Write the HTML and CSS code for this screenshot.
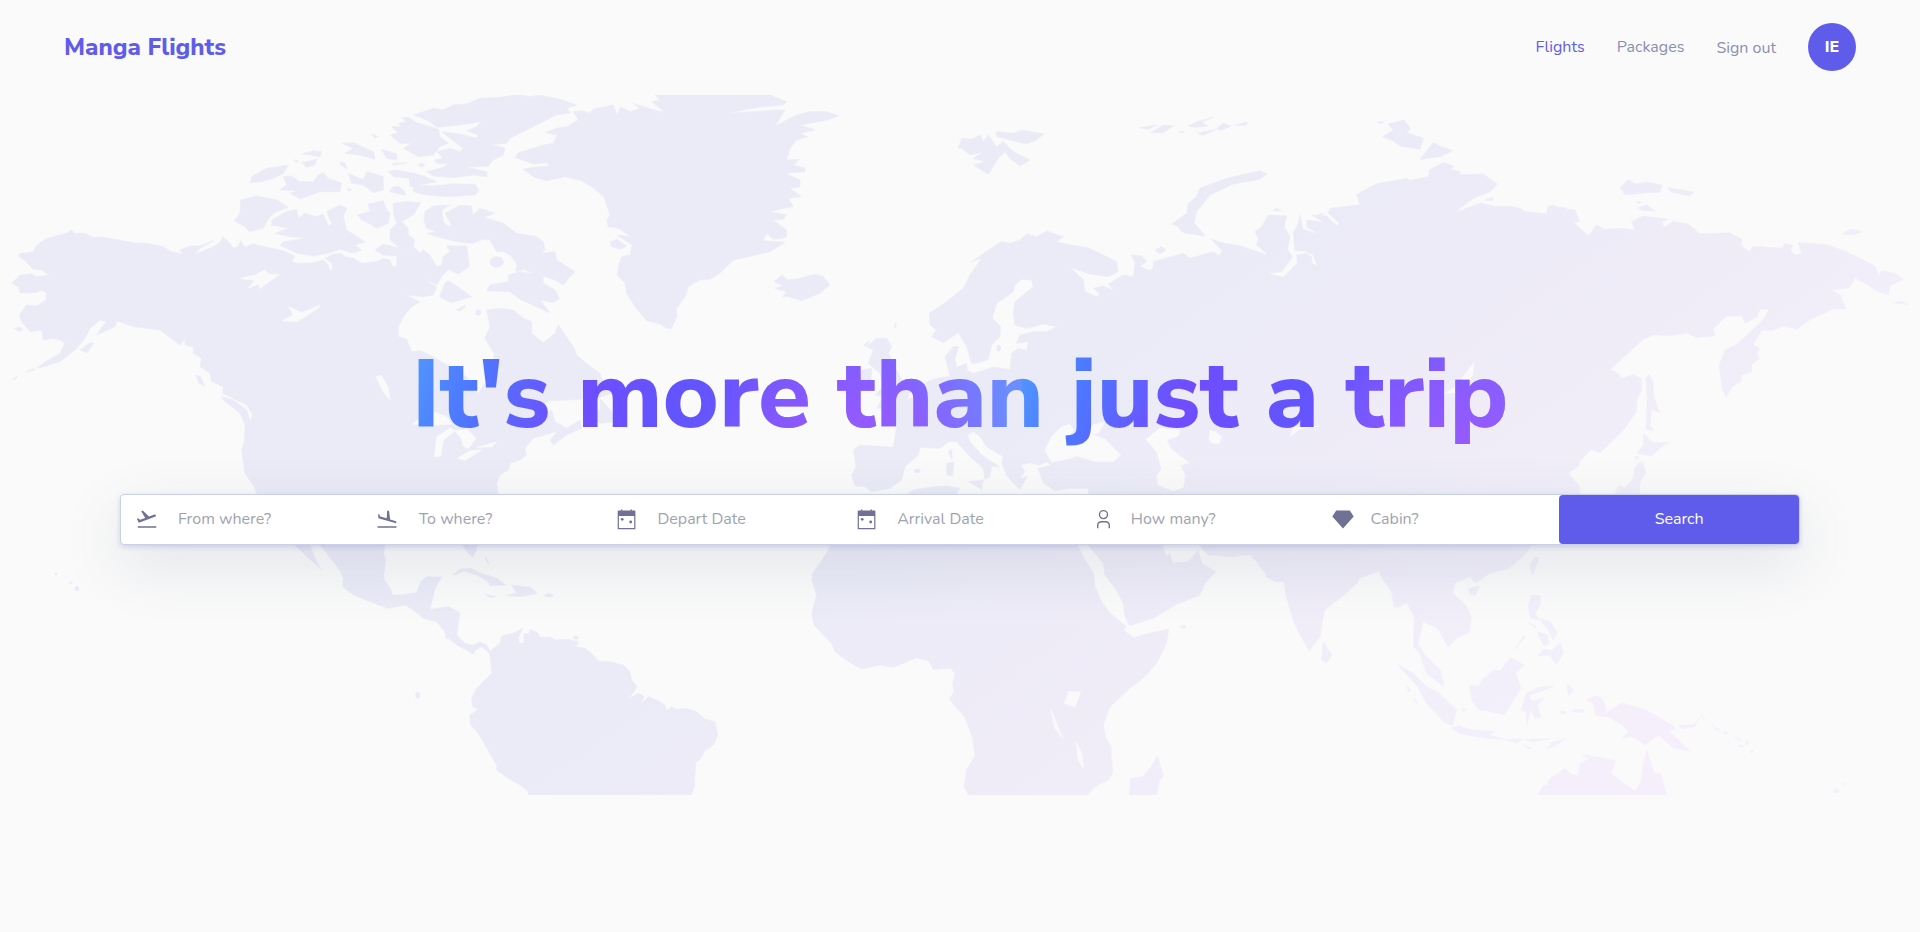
FILE: index.html
```html
<!DOCTYPE html>
<html lang="en">
<head>
<meta charset="utf-8">
<title>Manga Flights</title>
<link rel="stylesheet" href="styles.css">
</head>
<body>
<header class="header">
  <a class="brand">Manga Flights</a>
  <nav class="nav">
    <a class="nav-link nav-link-active">Flights</a>
    <a class="nav-link nav-packages">Packages</a>
    <a class="nav-link nav-signout">Sign out</a>
    <span class="avatar">IE</span>
  </nav>
</header>
<main class="hero">
  <svg class="map" viewBox="0 95 1920 700" aria-hidden="true">
    <defs>
      <linearGradient id="tint" gradientUnits="userSpaceOnUse" x1="0" y1="0" x2="986" y2="1377">
        <stop offset="0.56" stop-color="#ebebf7"/>
        <stop offset="0.7" stop-color="#efecf8"/>
        <stop offset="0.82" stop-color="#f2effa"/>
        <stop offset="0.92" stop-color="#f5effb"/>
      </linearGradient>
      <mask id="land" maskUnits="userSpaceOnUse" x="0" y="95" width="1920" height="700">
        <g transform="scale(.33333)" fill="#fff" stroke="#fff" stroke-width="2" stroke-linejoin="round">
          <!-- North America -->
          <path d="M35,850L60,825 95,822 110,830 148,826 125,810 100,808 75,782 55,768 60,760 100,756 108,738 135,718 165,708 200,700 215,690 225,700 250,700 265,705 280,712 310,712 345,718 400,728 440,730 490,740 515,755 548,762 540,750 570,738 600,738 640,722 600,745 585,762 605,755 650,735 662,725 668,710 685,725 700,745 715,738 722,722 735,742 760,732 800,742 850,752 885,768 875,785 895,790 940,788 970,780 985,795 990,812 998,808 995,790 975,775 1000,762 1025,760 1035,770 1060,775 1085,790 1130,785 1150,775 1170,780 1178,800 1190,798 1190,775 1205,750 1170,720 1170,690 1190,670 1180,640 1180,610 1220,605 1262,608 1240,645 1205,665 1225,685 1225,705 1245,720 1240,740 1262,760 1268,748 1290,765 1310,800 1325,795 1330,770 1350,755 1340,738 1400,738 1408,800 1375,822 1345,808 1325,830 1310,855 1270,835 1310,862 1300,885 1270,890 1215,885 1260,905 1235,920 1210,950 1195,980 1195,1010 1220,1018 1235,1055 1260,1052 1300,1070 1350,1100 1400,1130 1415,1160 1435,1180 1455,1150 1480,1110 1482,1060 1455,1015 1470,980 1460,930 1500,925 1540,930 1570,955 1595,965 1595,1000 1630,1028 1665,1000 1675,975 1695,1005 1720,1040 1730,1065 1765,1095 1800,1120 1810,1150 1840,1150 1835,1180 1790,1195 1700,1200 1645,1202 1600,1250 1640,1240 1655,1230 1665,1265 1700,1285 1740,1260 1745,1285 1700,1305 1660,1335 1650,1320 1672,1295 1650,1300 1600,1315 1575,1345 1580,1365 1560,1380 1530,1390 1525,1410 1500,1425 1490,1450 1495,1490 1430,1560 1430,1640 1428,1655 1417,1672 1405,1660 1390,1640 1380,1600 1200,1600 1155,1635 1150,1660 1157,1680 1150,1735 1170,1765 1178,1785 1200,1785 1250,1778 1262,1745 1280,1730 1325,1732 1305,1765 1295,1810 1290,1828 1345,1820 1380,1838 1375,1870 1370,1905 1390,1930 1415,1940 1400,1950 1370,1935 1360,1920 1338,1915 1335,1895 1310,1865 1270,1855 1240,1830 1215,1815 1190,1820 1165,1825 1110,1805 1060,1785 1028,1760 1030,1735 1020,1710 980,1660 960,1635 900,1560 770,1480 765,1465 735,1420 730,1385 725,1350 733,1325 735,1275 720,1240 670,1200 665,1190 700,1200 740,1230 750,1265 758,1245 740,1215 690,1190 668,1180 670,1160 635,1145 630,1120 600,1100 605,1075 580,1060 580,1040 555,1035 555,1015 540,1035 500,1005 480,990 440,985 400,980 350,962 345,980 290,1005 310,975 320,965 300,960 270,985 255,1015 230,1045 200,1070 180,1085 130,1100 110,1105 145,1080 180,1060 195,1030 180,1020 160,1015 130,1020 125,990 90,995 65,965 58,945 80,915 110,918 138,900 140,880 125,870 105,878 60,878 55,860Z"/>
          <path d="M240,1050L270,1028 282,1030 262,1058ZM42,985L60,982 70,990 55,994ZM80,1115L100,1106 104,1110ZM38,1138L52,1128 46,1138ZM588,1125L602,1130 614,1158 595,1148Z"/>
          <!-- Canadian archipelago -->
          <path d="M1170,405L1195,398 1175,380 1205,380 1195,370 1220,365 1205,354 1225,352 1250,368 1290,380 1315,388 1320,410 1345,430 1320,440 1300,465 1255,470 1210,445 1235,430 1200,430ZM1025,430L1060,428 1120,455 1125,478 1080,465 1035,460 1060,445ZM1145,448L1190,462 1190,480 1160,475ZM1175,490L1220,488 1180,496ZM1020,485L1035,490 1042,508 1022,495ZM1045,520L1090,540 1100,515 1150,530 1150,570 1120,578 1090,555 1055,550ZM1168,575L1180,560 1200,560 1215,575 1215,586ZM752,548L755,530 800,505 865,495 850,520 820,535 785,545ZM905,462L940,452 965,455 960,470 930,464ZM905,488L950,478 945,495 920,502ZM880,480L895,482 890,487ZM1113,402L1135,410 1125,414ZM840,570L860,555 850,530 875,528 900,545 940,545 955,525 970,518 985,535 1025,550 1020,575 960,575 900,597 870,580 890,572ZM722,600L770,588 830,600 865,622 820,640 800,665 790,685 748,695 735,680 703,663 720,640ZM815,660L860,635 890,628 895,655 915,640 950,650 970,642 985,678 995,672 980,635 1020,615 1040,625 1030,650 1040,690 1095,725 1065,735 1085,750 1060,760 1020,748 990,758 940,768 890,760 840,735 850,725 920,715 870,710 825,700 865,685 815,675ZM1073,645L1110,635 1105,612 1150,602 1160,630 1170,640 1165,670 1130,685 1110,672 1085,660ZM1125,750L1150,733 1180,740 1200,745 1210,770 1190,768 1150,765ZM1345,842L1380,865 1415,890 1400,895 1355,908 1318,890 1335,850ZM1165,515L1185,510 1245,520 1275,530 1310,545 1230,560 1228,535 1180,530ZM1255,495L1265,490 1275,495 1265,502ZM1042,565L1055,568 1048,574ZM1370,930L1395,915 1395,922 1378,934Z"/>
          <g transform="translate(1200 240)">
            <path d="M40,105L100,85 130,90 160,75 200,72 240,55 300,52 350,44 390,50 420,45 480,58 530,75 500,85 510,98 470,105 420,130 370,155 330,175 320,190 275,193 315,205 310,225 280,240 265,258 200,262 260,275 262,290 220,285 160,293 100,288 80,275 130,262 145,252 110,250 103,240 130,235 110,215 150,205 180,215 190,205 170,190 150,175 125,155 180,162 230,175 235,165 200,152 230,140 243,125 180,135 110,142 90,125 60,112ZM40,315L100,318 160,312 225,313 237,330 225,345 140,350 80,345 40,335ZM75,395L100,378 150,375 125,390 130,425 145,440 155,435 135,400 180,376 215,378 218,405 240,385 285,400 250,412 310,430 350,460 380,465 410,470 430,485 435,510 425,520 465,515 470,540 525,575 510,590 490,615 465,600 430,588 430,610 465,630 478,655 460,668 420,660 450,698 430,690 360,658 330,635 260,632 270,615 325,605 325,585 360,575 390,580 370,595 395,578 370,568 348,575 350,550 330,525 310,515 290,515 270,480 250,478 220,490 180,487 110,470 80,460 110,455 80,445 72,420Z"/>
            <ellipse cx="290" cy="546" rx="20" ry="16"/><ellipse cx="235" cy="698" rx="8" ry="8"/>
            <path d="M560,1010L600,990 600,955 640,1000 645,1025 600,1030Z"/>
            <!-- Greenland -->
            <path d="M520,95L545,92 570,100 580,88 640,75 652,106 662,80 690,95 720,85 700,70 755,88 795,98 755,65 780,60 765,45 1110,45 1160,65 1150,75 1090,80 1040,88 985,100 1060,95 1130,90 1155,90 1125,138 1190,105 1230,95 1280,95 1315,107 1290,118 1240,128 1200,135 1245,150 1200,160 1222,170 1190,180 1170,205 1160,240 1198,238 1180,255 1215,265 1215,275 1155,280 1200,300 1200,320 1170,325 1205,350 1165,355 1180,380 1150,385 1110,395 1160,405 1150,418 1118,420 1160,450 1158,472 1120,478 1100,460 1088,482 1155,487 1110,515 1060,527 1000,540 960,580 930,597 900,600 865,620 855,650 830,685 830,710 815,745 800,745 780,732 740,722 705,680 680,640 675,610 652,585 655,560 665,530 690,525 697,495 650,465 694,470 655,445 625,440 620,420 630,405 612,350 575,320 545,302 495,290 440,302 400,290 370,268 400,262 450,258 440,248 400,252 345,232 355,218 400,205 430,195 460,190 472,165 435,158 470,145 500,140 535,120ZM630,485L650,478 680,498 660,508 635,500Z"/>
            <!-- Iceland -->
            <path d="M1122,605L1145,585 1165,600 1200,595 1245,583 1270,590 1290,615 1260,640 1205,662 1165,650 1148,650 1160,635 1125,625 1150,618Z"/>
          </g>
          <!-- Caribbean -->
          <g transform="translate(300 1440)">
            <path d="M585,195L630,195 645,235 662,268 645,250 620,230ZM1060,285L1078,268 1110,265 1145,280 1190,295 1218,315 1170,317 1165,305 1130,285 1095,273ZM1235,316L1290,322 1312,340 1265,350 1220,346 1250,338ZM1155,343L1187,350 1170,352ZM1156,230L1168,252 1162,248Z"/>
            <ellipse cx="1347" cy="346" rx="13" ry="5"/><ellipse cx="953" cy="646" rx="6" ry="9"/>
          </g>
          <ellipse cx="231" cy="1766" rx="6" ry="7"/><ellipse cx="212" cy="1748" rx="6" ry="2"/><ellipse cx="168" cy="1722" rx="4" ry="3"/>
          <!-- South America -->
          <g transform="translate(1350 1440)">
            <path d="M10,460L0,480 40,505 70,523 75,512 95,500 118,520 122,540 125,580 105,600 80,625 65,655 68,680 85,688 60,705 62,735 85,760 105,795 140,855 140,870 175,895 210,915 235,935 235,946 724,946 733,920 737,845 748,842 765,812 790,795 803,765 795,725 765,718 740,695 710,685 680,688 665,680 648,692 645,675 620,660 595,650 570,675 583,650 565,640 537,655 562,620 545,600 540,575 520,555 480,545 445,543 425,520 405,505 378,500 385,485 350,478 315,480 300,472 270,472 262,458 240,448 238,460 222,462 222,490 208,490 205,475 218,445 195,458 155,468 150,490 130,505 120,515 110,495 90,485 70,495 45,490 20,465Z"/>
            <ellipse cx="377" cy="473" rx="8" ry="5"/>
          </g>
          <!-- Europe and the Arctic islands -->
          <g transform="translate(2340 240)">
            <path d="M448,700L470,685 500,665 550,625 570,585 605,535 575,545 640,500 665,485 690,490 720,480 740,462 770,470 800,453 850,470 830,485 870,495 920,502 960,520 1010,545 1014,575 985,590 930,582 870,562 900,590 910,598 915,635 950,650 960,642 940,625 970,618 1002,632 985,612 1030,585 1060,590 1065,550 1055,525 1085,528 1100,545 1080,560 1110,572 1150,540 1200,530 1230,535 1300,515 1320,530 1330,505 1310,490 1380,497 1460,525 1460,1260 925,1260 925,1225 870,1225 825,1232 790,1210 775,1165 815,1155 800,1145 780,1155 750,1148 722,1155 735,1175 720,1195 742,1190 720,1228 700,1210 680,1185 665,1150 670,1130 620,1100 600,1070 580,1055 562,1065 570,1085 605,1125 658,1160 635,1160 630,1190 615,1198 610,1165 570,1130 530,1085 505,1085 480,1105 420,1102 415,1125 375,1160 365,1200 330,1225 275,1235 255,1220 225,1218 215,1185 228,1160 220,1110 240,1095 340,1102 350,1040 310,1000 300,980 350,975 400,950 440,905 470,895 510,888 495,830 520,800 535,800 525,840 530,862 560,850 562,872 580,880 640,862 690,868 695,820 715,805 740,812 745,785 710,790 720,765 760,755 800,755 832,740 790,732 740,745 705,735 700,700 705,665 760,620 755,600 725,598 705,615 700,635 650,670 637,715 662,740 660,770 635,795 625,838 590,850 575,850 560,800 535,758 490,788 455,770 470,750 450,735Z"/>
            <path d="M265,850L280,810 260,800 290,775 320,775 335,800 325,820 345,860 370,910 390,935 380,965 340,975 290,985 310,950 285,945 310,920 300,880ZM235,920L245,870 275,865 272,925ZM252,795L268,782 258,800ZM342,745L347,728 350,738ZM565,1205L610,1200 605,1228ZM500,1150L522,1146 518,1188 500,1185ZM505,1115L515,1108 516,1138ZM370,1250L400,1230 450,1222 500,1218 540,1225 530,1240 560,1260ZM1125,510L1145,500 1158,510 1140,522Z"/>
            <ellipse cx="412" cy="1173" rx="9" ry="5"/><ellipse cx="656" cy="805" rx="6" ry="9"/>
            <path d="M535,205L545,175 575,178 600,165 610,185 625,165 650,200 670,185 700,215 750,240 720,258 690,235 675,215 655,235 625,283 580,255 615,245 580,235 610,215 570,225 545,205ZM648,155L700,160 725,150 792,162 770,180 740,192 690,180 650,170ZM1078,143L1130,135 1105,148ZM1112,158L1150,135 1180,138 1150,158ZM1195,155L1215,154 1205,160ZM1225,138L1250,125 1300,112 1265,125 1282,138 1245,142ZM1252,160L1310,148 1270,166ZM1310,145L1330,130 1355,138 1325,150ZM1363,136L1403,126 1398,136Z"/>
          </g>
          <!-- Siberia -->
          <g transform="translate(3480 240)">
            <path d="M-20,545L70,520 90,535 150,525 170,532 190,515 165,490 155,478 185,488 230,497 310,535 320,520 290,495 295,475 285,455 305,440 325,405 380,408 372,440 390,470 382,510 398,530 365,575 322,580 370,592 412,550 410,525 440,520 455,530 455,550 472,557 460,525 435,512 405,512 400,460 415,430 420,405 428,448 474,462 440,440 440,420 495,428 455,405 500,408 530,438 538,430 505,400 510,385 600,375 590,345 605,335 650,312 740,295 750,302 805,290 808,270 850,248 882,258 870,268 900,275 900,285 970,282 1012,312 990,335 940,355 880,400 920,385 960,370 1000,378 1005,390 1060,382 1100,395 1160,402 1170,378 1220,385 1220,1260 -20,1260Z"/>
            <path d="M35,432L80,400 85,370 110,350 120,325 200,295 300,272 320,282 300,298 220,312 150,345 110,395 102,428 135,468 80,460 65,455 55,440ZM668,170L700,150 685,132 732,120 752,145 740,158 790,175 780,208 720,198 700,182ZM652,126L672,126 662,130ZM780,238L820,188 840,198 878,212 840,230ZM338,392L350,384 362,392ZM975,360L1000,352 998,362ZM475,402L490,400 482,406Z"/>
          </g>
          <!-- Far East -->
          <g transform="translate(4500 0) scale(1 1.0714)">
            <path d="M-20,578L30,578 65,585 70,595 140,600 145,578 160,573 180,585 225,588 238,620 220,622 265,660 290,630 310,642 375,640 405,645 395,620 430,605 505,614 485,620 492,637 520,620 565,628 600,655 690,652 725,670 725,688 748,705 760,690 845,695 855,682 880,688 870,698 885,714 905,710 895,680 980,685 1040,705 1125,745 1137,774 1145,758 1185,765 1210,782 1170,800 1165,825 1130,815 1100,795 1065,778 1050,805 990,812 1020,825 1038,865 1000,865 930,895 890,922 850,912 820,925 785,925 760,965 778,975 770,990 778,1005 755,1020 755,1040 725,1050 720,1070 700,1080 678,1112 668,1090 657,1025 675,980 710,965 790,895 808,865 780,866 770,888 735,905 725,885 680,885 640,920 645,940 590,945 560,932 510,940 460,937 430,950 330,1035 355,1045 365,1060 400,1048 425,1062 425,1095 412,1115 408,1155 370,1205 300,1268 275,1258 240,1290 235,1305 205,1325 238,1360 240,1390 190,1390 190,1370 165,1355 170,1330 145,1318 110,1335 105,1325 120,1303 85,1315 50,1340 75,1370 120,1360 80,1390 -20,1390Z"/>
            <path d="M437,1060L447,1048 460,1070 460,1105 478,1155 455,1145 450,1190 463,1205 438,1203 442,1110ZM432,1215L460,1240 508,1238 480,1255 455,1277 410,1270 430,1245ZM405,1278L418,1280 408,1288ZM415,1298L428,1293 437,1325 420,1350 418,1390 343,1390 355,1360 375,1365 400,1340 405,1310ZM360,525L385,502 405,515 440,510 487,518 480,538 440,540 375,545ZM503,525L582,538 570,548 515,538ZM410,565L425,565 415,570ZM415,582L440,574 465,590 430,590ZM1028,655L1050,642 1087,648 1060,658ZM1178,847L1205,844 1227,854Z"/>
          </g>
          <!-- Africa and Arabia -->
          <g transform="translate(2400 1440)">
            <path d="M115,150L90,200 70,235 38,280 36,300 50,345 36,400 42,435 70,465 95,490 105,515 150,548 185,567 240,555 280,562 350,533 385,542 400,568 450,565 465,580 458,610 462,635 448,658 495,712 518,775 525,825 500,870 492,920 505,946 862,946 885,920 925,900 938,880 933,800 918,775 910,735 930,680 990,625 1035,590 1070,550 1100,490 1106,447 1060,457 1000,473 970,450 980,440 930,400 905,365 885,320 880,280 855,240 830,190 800,150ZM850,150L865,195 910,250 915,285 950,330 970,370 975,410 988,437 1060,415 1125,375 1200,345 1215,310 1247,275 1205,250 1195,210 1165,245 1118,250 1110,220 1100,230 1085,190 1085,150ZM1180,150L1205,205 1225,225 1300,230 1350,223 1370,245 1400,285 1425,305 1460,303 1460,150ZM988,946L992,898 1030,888 1050,865 1073,828 1090,888 1078,900 1070,946Z"/>
            <ellipse cx="1150" cy="440" rx="8" ry="4"/>
          </g>
          <!-- South-east Asia and Oceania -->
          <g transform="translate(3720 1440) scale(1.301 1)">
            <path d="M-20,190L0,225 25,225 60,270 60,290 85,305 100,283 105,340 125,430 145,480 160,512 185,470 190,420 195,390 240,345 270,310 275,295 320,272 330,300 350,335 355,382 370,380 385,368 402,410 400,500 415,520 430,580 470,620 462,570 430,530 410,490 422,425 455,445 480,500 500,475 530,455 533,410 520,375 490,340 495,310 530,290 543,310 575,280 620,265 655,225 675,190 675,150 -20,150ZM192,485L212,525 200,548 188,540ZM528,325L552,318 542,348 528,340ZM668,255L680,232 690,235 675,283ZM672,345L692,348 693,375 680,400 690,420 670,415 665,375ZM690,415L715,425 732,460 722,480 710,450ZM685,455L710,465 712,490 700,497ZM668,428L682,440 680,445ZM687,528L700,508 718,512 738,488 746,520 730,553 712,525ZM633,508L655,467 658,472ZM528,615L550,620 560,598 585,570 600,572 625,533 655,555 635,580 648,625 630,660 610,705 570,692 550,690 535,660ZM362,552L400,580 430,620 460,640 500,690 490,737 470,725 430,670 410,620 385,585ZM488,745L505,737 530,748 585,755 575,765 610,778 570,775 510,762ZM613,780L650,776 640,789ZM655,778L715,776 675,786ZM708,806L718,788 752,776 722,800ZM652,793L672,805 665,806ZM648,692L660,640 690,622 723,618 690,636 668,645 672,665 703,653 685,675 694,712 680,714 670,685 662,735 660,695ZM753,612L770,630 758,648ZM798,660L820,648 835,655 847,697 880,668 935,690 970,715 1005,744 990,755 1020,790 1037,812 1000,805 965,765 935,794 905,770 880,775 897,755 885,738 850,712 820,706 815,670ZM1010,736L1045,735 1062,712 1048,740 1020,746ZM1062,700L1072,718 1068,716ZM1088,732L1105,752 1098,750ZM1140,768L1158,782 1154,784ZM686,946L700,915 708,920 712,900 750,865 765,885 780,885 785,850 815,830 868,842 855,880 880,905 910,932 925,905 930,850 938,812 950,860 955,880 970,880 984,946ZM385,618L393,632 388,634ZM402,656L409,668 404,668ZM1388,916L1398,908 1390,918Z"/>
            <ellipse cx="780" cy="693" rx="14" ry="4"/><ellipse cx="745" cy="697" rx="7" ry="4"/><ellipse cx="1375" cy="933" rx="7" ry="6"/><ellipse cx="1120" cy="758" rx="5" ry="3"/><ellipse cx="1156" cy="798" rx="6" ry="3"/><ellipse cx="1168" cy="788" rx="3" ry="7"/><ellipse cx="1180" cy="815" rx="4" ry="3"/><ellipse cx="517" cy="690" rx="4" ry="4"/><ellipse cx="800" cy="829" rx="9" ry="3"/>
          </g>
        </g>
        <!-- Lakes and inland seas -->
        <g transform="scale(.33333)" fill="#000" stroke="#000" stroke-width="2" stroke-linejoin="round">
          <path d="M722,835L765,825 795,810 805,822 838,824 800,850 780,866 775,852 745,864 765,840 730,837ZM846,962L880,945 866,920 905,938 960,915 955,925 890,965ZM1128,1130L1145,1126 1165,1165 1170,1200 1150,1175Z"/>
          <path transform="translate(1200 240)" d="M38,1032L90,992 140,1010 155,1032 110,1035ZM104,1130L110,1070 150,1045 165,1052 130,1080 122,1128ZM165,1052L200,1048 228,1075 205,1105 190,1100 185,1078ZM173,1135L210,1112 245,1110 195,1141ZM232,1102L290,1086 275,1100Z"/>
          <path transform="translate(2340 240)" d="M795,1110L815,1070 845,1040 870,1033 880,1050 870,1065 900,1075 930,1060 975,1078 1022,1125 1000,1145 950,1145 890,1128 850,1140 815,1147ZM905,1045L975,1025 955,1060 915,1062ZM1098,1078L1140,1045 1200,1050 1195,1068 1160,1080 1172,1105 1195,1125 1228,1148 1200,1155 1215,1185 1210,1222 1180,1232 1135,1215 1130,1190 1145,1165 1130,1115ZM1287,1080L1290,1052 1305,1055 1325,1070 1318,1090 1298,1090Z"/>
          <path transform="translate(3480 240)" d="M850,942L885,922 942,848 938,885 900,935ZM392,1068L400,1042 478,1038 420,1048Z"/>
          <path transform="translate(2400 1440)" d="M793,670L805,635 842,636 825,680ZM752,688L768,725 787,773 765,745ZM829,788L845,820 852,867 835,840Z"/>
        </g>
      </mask>
    </defs>
    <rect y="95" width="1920" height="700" fill="url(#tint)" mask="url(#land)"/>
  </svg>
  <div class="content">
    <h1 class="headline">It's more than just a trip</h1>
    <form class="search">
      <div class="field">
        <svg class="icon" width="24" height="24" viewBox="0 0 24 24"><path d="M20.900 8.300c-.2-.6-.7-.9-1.300-.7L14 9.500 7.700 3.600l-1.500.6 4 6.800-5.200 1.800-2-1.500-1.100.4 1.900 4 16.200-5.900c.7-.2 1.100-.8.9-1.500zM2.800 19.200h18.500v1.500H2.800z"/></svg>
        <span>From where?</span>
      </div>
      <div class="field field-landing">
        <svg class="icon" width="24" height="24" viewBox="0 0 24 24"><path d="M3.200 6.900l1.100.3.900 2.300 6.500 1.700.5-7.700 1.900.5 1 8.400 5.200 1.500c.7.200 1.200.9 1 1.600l-.2.700L3.400 11.200zM2.500 19.200h19v1.500h-19z"/></svg>
        <span>To where?</span>
      </div>
      <div class="field">
        <svg class="icon" width="24" height="24" viewBox="0 0 24 24"><path fill-rule="evenodd" d="M6.900 2.600h1.400v1h8.200v-1h1.400v1h2.600q.9 0 .9.900v17.700H3.700V4.500q0-.9.900-.9h2.300zM4.900 9v12h15.300V9z"/><circle cx="8.200" cy="12.300" r="1.400"/><circle cx="16.700" cy="15" r="1.400"/></svg>
        <span>Depart Date</span>
      </div>
      <div class="field">
        <svg class="icon" width="24" height="24" viewBox="0 0 24 24"><path fill-rule="evenodd" d="M6.900 2.600h1.400v1h8.200v-1h1.400v1h2.600q.9 0 .9.900v17.700H3.700V4.500q0-.9.900-.9h2.300zM4.900 9v12h15.300V9z"/><circle cx="8.200" cy="12.300" r="1.400"/><circle cx="16.700" cy="15" r="1.400"/></svg>
        <span>Arrival Date</span>
      </div>
      <div class="field field-compact">
        <svg class="icon icon-line" width="22" height="24" viewBox="0 0 22 24"><circle cx="10.500" cy="7.600" r="4"/><path d="M4.700 21.300v-2.600q0-4 4-4h3.600q4 0 4 4v2.600"/></svg>
        <span>How many?</span>
      </div>
      <div class="field field-compact">
        <svg class="icon" width="22" height="24" viewBox="0 0 22 24"><path d="M3.200 3.500h13.600l3.900 6-10.700 12L-.7 9.500z"/></svg>
        <span>Cabin?</span>
      </div>
      <button class="submit" type="button">Search</button>
    </form>
  </div>
</main>
</body>
</html>
```
FILE: styles.css
```css
* {
  box-sizing: border-box;
}

body {
  margin: 0;
  min-height: 932px;
  background: #fafafa;
  font-family: Nunito, "Noto Sans", sans-serif;
  font-size: 16px;
  line-height: 24px;
  overflow-x: hidden;
}

.header {
  display: flex;
  align-items: center;
  justify-content: space-between;
  height: 95px;
  padding: 0 64px 2px;
}

.brand {
  color: #605ceb;
  font-family: "Nunito Sans", Nunito, sans-serif;
  font-size: 24px;
  font-weight: 800;
  line-height: 32px;
}

.nav {
  display: flex;
  align-items: center;
  gap: 32px;
}

.nav-link {
  color: #8b90b0;
}

.nav-link-active {
  color: #605ceb;
}

.nav-signout {
  padding-top: 2px;
}

.avatar {
  display: flex;
  align-items: center;
  justify-content: center;
  width: 48px;
  height: 48px;
  border-radius: 50%;
  background: #605ceb;
  color: #fff;
  font-family: "Nunito Sans", Nunito, sans-serif;
  font-weight: 800;
}

.hero {
  display: grid;
  height: 700px;
}

.map,
.content {
  grid-area: 1 / 1;
}

.map {
  display: block;
  width: 1920px;
  height: 700px;
}

.content {
  z-index: 1;
  display: flex;
  flex-direction: column;
  align-items: center;
  padding-top: 235px;
}

.headline {
  margin: 0 0 33px;
  font-family: "Nunito Sans", Nunito, sans-serif;
  font-size: 96px;
  font-weight: 800;
  line-height: 131px;
  white-space: nowrap;
  color: transparent;
  background-image:
    radial-gradient(ellipse 25% 100% at 74% 92%, #985aff 0%, #9458ffbb 45%, #8b5cff00 100%),
    linear-gradient(110deg, #529bff 0%, #4d78ff 12%, #704dff 28%, #6254ff 45%, #7458ff 62%, #7668ff 74%, #6a92ff 98%);
  background-size: 610px 100%;
  -webkit-background-clip: text;
  background-clip: text;
}

.search {
  display: grid;
  grid-template-columns: repeat(7, 1fr);
  width: 1680px;
  height: 51px;
  border: 1px solid #c9d0e8;
  border-radius: 4px;
  background: #fff;
  box-shadow: 0 2px 5px rgba(90, 100, 170, 0.22), 0 20px 60px rgba(70, 90, 130, 0.14);
}

.field {
  display: flex;
  align-items: center;
  gap: 19px;
  padding-left: 14px;
  padding-bottom: 2px;
  color: #9fa3b1;
}

.field-landing {
  gap: 20px;
}

.field-compact {
  gap: 16px;
  padding-left: 13px;
}

.icon {
  flex: none;
  overflow: visible;
  fill: #6f7294;
}

.icon-line {
  fill: none;
  stroke: #6f7294;
  stroke-width: 1.4;
}

.submit {
  padding: 0 0 2px;
  border: 0;
  border-radius: 4px;
  background: #605ceb;
  color: #fff;
  font: inherit;
}
```
